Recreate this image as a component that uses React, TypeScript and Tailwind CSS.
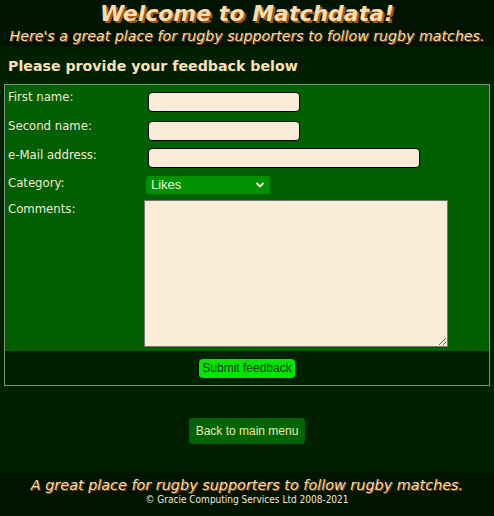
export default function App() {
  return (
    <div className="w-[494px] h-[516px] flex flex-col bg-[#002000] font-['DejaVu_Sans_Condensed','DejaVu_Sans',sans-serif]">
      <header className="h-[47px] bg-[#001400] flex flex-col items-center">
        <h1 className="mt-[1px] text-[22px] leading-[26px] font-bold italic text-[#fbdcae] [text-shadow:2px_2px_0_#a05a10] font-['DejaVu_Sans',sans-serif]">
          Welcome to Matchdata!
        </h1>
        <p className="whitespace-nowrap text-[14.2px] leading-[18px] italic text-[#fbdcae] [text-shadow:1px_1px_0_#8a4a10] font-['DejaVu_Sans',sans-serif]">
          Here's a great place for rugby supporters to follow rugby matches.
        </p>
      </header>

      <main className="flex-1 flex flex-col">
        <h2 className="ml-2 mt-[10px] text-[14.2px] leading-[18px] font-bold text-[#fbe0b8] font-['DejaVu_Sans',sans-serif]">
          Please provide your feedback below
        </h2>

        <form className="mx-1 mt-[9px] border border-[#7d8f7d]">
          <div className="bg-[#005f00] pt-[3px] pb-[4px] grid grid-cols-[140px_1fr] text-[13px] leading-[16px] text-[#f6ead6]">
            <label className="pl-[3px] pt-[1px] h-[29px]">First name:</label>
            <div className="pt-[4px]">
              <input className="w-[152px] h-[20px] rounded-[4px] bg-[#faebd7] border border-black ml-[3px]" />
            </div>
            <label className="pl-[3px] pt-[1px] h-[29px]">Second name:</label>
            <div className="pt-[4px]">
              <input className="w-[152px] h-[20px] rounded-[4px] bg-[#faebd7] border border-black ml-[3px]" />
            </div>
            <label className="pl-[3px] pt-[1px] h-[28px]">e-Mail address:</label>
            <div className="pt-[2px]">
              <input className="w-[272px] h-[20px] rounded-[4px] bg-[#faebd7] border border-black ml-[3px]" />
            </div>
            <label className="pl-[3px] pt-[1px] h-[26px]">Category:</label>
            <div className="pt-[1px]">
              <div className="relative w-[126px] h-[20px] rounded-[4px] bg-[#009000] border border-[#006000] flex items-center">
                <span className="pl-[5px] text-[13px] text-[#eafbe0] font-['Liberation_Sans',sans-serif]">Likes</span>
                <svg className="absolute right-[5px] top-[5px]" width="10" height="8" viewBox="0 0 10 8">
                  <path d="M1.5 2 L5 5.5 L8.5 2" fill="none" stroke="#f2f2d8" strokeWidth="1.8" />
                </svg>
              </div>
            </div>
            <label className="pl-[3px] pt-[1px]">Comments:</label>
            <div>
              <textarea className="block w-[304px] h-[147px] bg-[#faebd7] border border-[#767676] -ml-[1px] resize-y" />
            </div>
          </div>
          <div className="h-[34px] bg-[#002000] flex items-center justify-center">
            <button
              type="button"
              className="h-[19px] px-[3px] rounded-[4px] bg-[#00e600] text-[12px] leading-[14px] text-[#063806] font-['Liberation_Sans',sans-serif]"
            >
              Submit feedback
            </button>
          </div>
        </form>

        <div className="flex justify-center mt-[32px]">
          <button
            type="button"
            className="h-[26px] px-[7px] rounded-[3px] bg-[#006400] text-[12px] text-[#f4e6a8] font-['Liberation_Sans',sans-serif]"
          >
            Back to main menu
          </button>
        </div>
      </main>

      <footer className="h-[44px] bg-[#001400] flex flex-col items-center pt-[4px]">
        <p className="whitespace-nowrap text-[14.4px] leading-[18px] italic text-[#fbdcae] [text-shadow:1px_1px_0_#8a4a10] font-['DejaVu_Sans',sans-serif]">
          A great place for rugby supporters to follow rugby matches.
        </p>
        <p className="text-[10px] leading-[12px] text-[#f6ead6]">© Gracie Computing Services Ltd 2008-2021</p>
      </footer>
    </div>
  );
}
